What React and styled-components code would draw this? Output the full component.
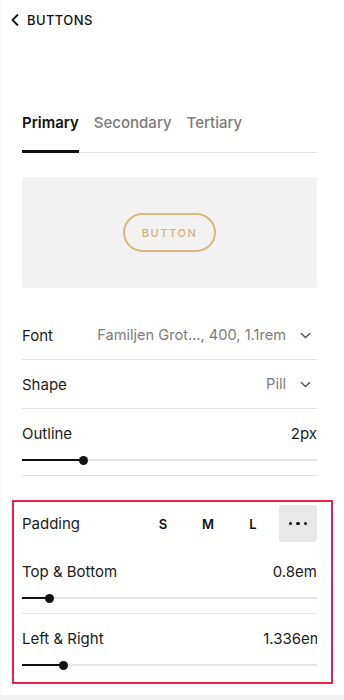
import * as React from "react";
import styled, { createGlobalStyle } from "styled-components";

const GlobalStyle = createGlobalStyle`
  html, body {
    margin: 0;
    padding: 0;
    background: #ffffff;
  }
  body {
    font-family: Inter, "Noto Sans", "Liberation Sans", sans-serif;
    color: #1b1b1b;
    -webkit-font-smoothing: antialiased;
  }
  * {
    box-sizing: border-box;
  }
`;

const Page = styled.div`
  width: 344px;
  height: 700px;
  overflow: hidden;
  background: #ffffff;
  display: flex;
  flex-direction: column;
  box-shadow: inset 2px 0 3px -2px rgba(0, 0, 0, 0.08);
`;

const Header = styled.div`
  height: 40px;
  display: flex;
  align-items: center;
  gap: 7px;
  padding: 0 10px;
  font-size: 13px;
  font-weight: 500;
  letter-spacing: 0.4px;
  color: #111;
`;

const Content = styled.div`
  padding: 0 27px 0 22px;
  display: flex;
  flex-direction: column;
`;

const Tabs = styled.div`
  margin-top: 63px;
  display: flex;
  gap: 15px;
  border-bottom: 1px solid #e3e3e3;
`;

const Tab = styled.div`
  padding: 10px 0 17px;
  line-height: 20px;
  font-size: 15px;
  font-weight: ${(p) => (p.$active ? 600 : 500)};
  color: ${(p) => (p.$active ? "#111" : "#7a7a7a")};
  border-bottom: 3px solid ${(p) => (p.$active ? "#111" : "transparent")};
  margin-bottom: -1px;
`;

const Preview = styled.div`
  margin-top: 24px;
  height: 111px;
  background: #f2f2f2;
  border-radius: 3px;
  display: flex;
  align-items: center;
  justify-content: center;
`;

const PreviewButton = styled.div`
  width: 93px;
  height: 39px;
  border: 2px solid #d8b87f;
  border-radius: 20px;
  display: flex;
  align-items: center;
  justify-content: center;
  font-size: 11px;
  font-weight: 500;
  letter-spacing: 1.6px;
  color: #d3b17f;
`;

const Rows = styled.div`
  margin-top: 23px;
  display: flex;
  flex-direction: column;
`;

const Row = styled.div`
  height: 48px;
  display: flex;
  align-items: center;
  justify-content: space-between;
  font-size: 15px;
  overflow: hidden;
  white-space: nowrap;
  border-bottom: ${(p) => (p.$line ? "1px solid #e3e3e3" : "none")};
  box-sizing: content-box;
`;

const Label = styled.span`
  color: #1b1b1b;
`;

const Value = styled.span`
  display: flex;
  align-items: center;
  gap: 14px;
  font-size: ${(p) => (p.$muted ? "14.6px" : "15px")};
  color: ${(p) => (p.$muted ? "#7c7c7c" : "#1b1b1b")};
  padding-right: ${(p) => (p.$muted ? "6px" : "0")};
  margin-right: ${(p) => (p.$clip ? "-6px" : "0")};
`;

const SliderBlock = styled.div`
  display: flex;
  flex-direction: column;
  border-bottom: ${(p) => (p.$line ? "1px solid #e3e3e3" : "none")};
`;

const Slider = styled.div`
  position: relative;
  height: 8px;
  margin: -1px 0 11px;
  background: linear-gradient(#e6e6e6, #e6e6e6) center / 100% 2px no-repeat;
`;

const SliderFill = styled.div`
  position: absolute;
  left: 0;
  top: 3px;
  height: 2px;
  background: #111;
`;

const Thumb = styled.div`
  position: absolute;
  top: 0;
  width: 9px;
  height: 9px;
  margin-left: -4px;
  margin-top: -0.5px;
  border-radius: 50%;
  background: #111;
`;

const Highlight = styled.div`
  margin: 24px 11px 0 12px;
  border: 2px solid #e2244f;
  padding: 3px 14px 2px 8px;
  display: flex;
  flex-direction: column;
`;

const PaddingRow = styled.div`
  height: 37px;
  margin-bottom: 5px;
  display: flex;
  align-items: center;
  justify-content: space-between;
  font-size: 15px;
`;

const Options = styled.div`
  display: flex;
  gap: 7px;
`;

const Option = styled.div`
  width: 38px;
  height: 37px;
  border-radius: 3px;
  display: flex;
  align-items: center;
  justify-content: center;
  gap: 4px;
  font-size: 13px;
  font-weight: 600;
  color: #111;
  background: ${(p) => (p.$active ? "#e8e8e8" : "transparent")};
`;

const Dot = styled.span`
  width: 3.5px;
  height: 3.5px;
  border-radius: 50%;
  background: #111;
`;

const Footer = styled.div`
  margin-top: auto;
  height: 5px;
  background: #f2f2f2;
`;

const ChevronLeft = () => (
  <svg width="10" height="14" viewBox="0 0 10 14" fill="none">
    <path d="M8 1.5L2.5 7L8 12.5" stroke="#111" strokeWidth="1.8" />
  </svg>
);

const ChevronDown = () => (
  <svg width="11" height="7" viewBox="0 0 11 7" fill="none">
    <path d="M1 1.2L5.5 5.5L10 1.2" stroke="#555" strokeWidth="1.5" />
  </svg>
);

const SliderRow = ({ label, value, pos, line, clip }) => (
  <SliderBlock $line={line}>
    <Row>
      <Label>{label}</Label>
      <Value $clip={clip}>{value}</Value>
    </Row>
    <Slider>
      <SliderFill style={{ width: `${pos}px` }} />
      <Thumb style={{ left: `${pos}px` }} />
    </Slider>
  </SliderBlock>
);

export default function App() {
  return (
    <Page>
      <GlobalStyle />
      <Header>
        <ChevronLeft />
        <span>BUTTONS</span>
      </Header>
      <Content>
        <Tabs>
          <Tab $active>Primary</Tab>
          <Tab>Secondary</Tab>
          <Tab>Tertiary</Tab>
        </Tabs>
        <Preview>
          <PreviewButton>BUTTON</PreviewButton>
        </Preview>
        <Rows>
          <Row $line>
            <Label>Font</Label>
            <Value $muted>
              Familjen Grot..., 400, 1.1rem
              <ChevronDown />
            </Value>
          </Row>
          <Row $line>
            <Label>Shape</Label>
            <Value $muted>
              Pill
              <ChevronDown />
            </Value>
          </Row>
          <SliderRow label="Outline" value="2px" pos={61} line />
        </Rows>
      </Content>
      <Highlight>
        <PaddingRow>
          <Label>Padding</Label>
          <Options>
            <Option>S</Option>
            <Option>M</Option>
            <Option>L</Option>
            <Option $active>
              <Dot />
              <Dot />
              <Dot />
            </Option>
          </Options>
        </PaddingRow>
        <SliderRow label="Top & Bottom" value="0.8em" pos={27} line />
        <SliderRow label="Left & Right" value="1.336em" pos={41} clip />
      </Highlight>
      <Footer />
    </Page>
  );
}
